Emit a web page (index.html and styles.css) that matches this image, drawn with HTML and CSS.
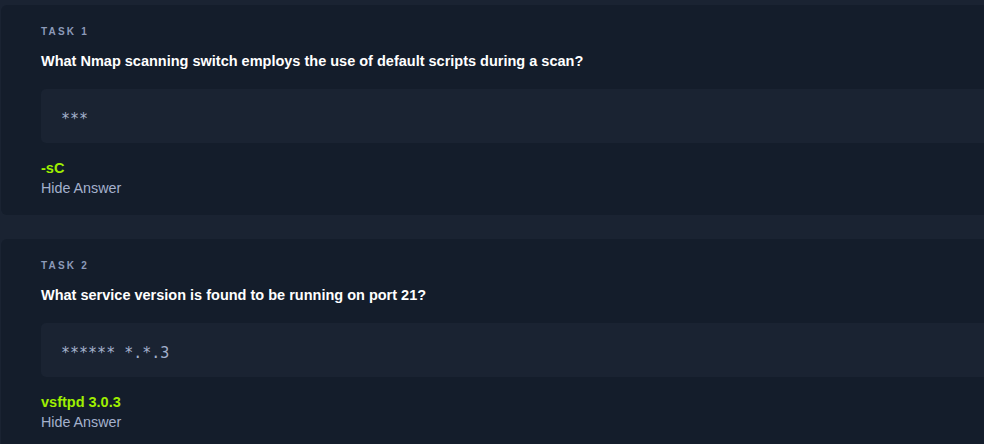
FILE: index.html
```html
<!DOCTYPE html>
<html>
<head>
<meta charset="utf-8">
<link rel="stylesheet" href="styles.css">
</head>
<body>
<div class="list">
  <section class="card">
    <div class="label">TASK 1</div>
    <div class="question">What Nmap scanning switch employs the use of default scripts during a scan?</div>
    <div class="input"><span class="mask">***</span></div>
    <div class="answer">-sC</div>
    <div class="toggle">Hide Answer</div>
  </section>
  <section class="card">
    <div class="label">TASK 2</div>
    <div class="question">What service version is found to be running on port 21?</div>
    <div class="input"><span class="mask">****** *.*.3</span></div>
    <div class="answer">vsftpd 3.0.3</div>
    <div class="toggle">Hide Answer</div>
  </section>
</div>
</body>
</html>
```
FILE: styles.css
```css
html, body {
  margin: 0;
  padding: 0;
  background: #1a2332;
  height: 444px;
  overflow: hidden;
}
body {
  font-family: "Liberation Sans", Arial, sans-serif;
}
.list {
  display: flex;
  flex-direction: column;
  gap: 24px;
  padding-top: 5px;
  padding-left: 1px;
}
.card {
  background: #141d2b;
  border-radius: 6px 0 0 6px;
  padding: 21px 0 17px 40px;
}
.label {
  font-size: 10px;
  font-weight: bold;
  letter-spacing: 2.2px;
  color: #8c9ab9;
  line-height: 12px;
}
.question {
  margin-top: 15px;
  font-size: 14.5px;
  font-weight: bold;
  color: #ffffff;
  line-height: 16px;
}
.input {
  margin-top: 20px;
  height: 54px;
  background: #1a2332;
  border-radius: 5px 0 0 5px;
  display: flex;
  align-items: center;
  padding-left: 20px;
}
.mask {
  font-family: "DejaVu Sans Mono", "Liberation Mono", monospace;
  font-size: 15px;
  color: #a4b1cd;
  padding-top: 5px;
}
.answer {
  margin-top: 15px;
  font-size: 14.5px;
  font-weight: bold;
  color: #9fef00;
  line-height: 20px;
}
.toggle {
  font-size: 14.3px;
  color: #a4b1cd;
  line-height: 20px;
}
```
